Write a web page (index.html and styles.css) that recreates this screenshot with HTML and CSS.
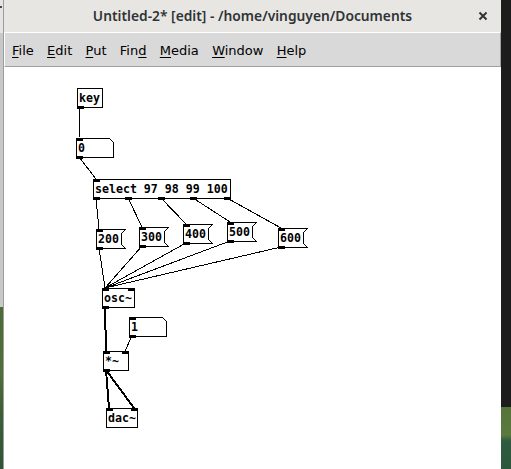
FILE: index.html
```
<!DOCTYPE html>
<html lang="en">
<head>
<meta charset="utf-8">
<title>Pd patch</title>
<link rel="stylesheet" href="styles.css">
</head>
<body>
<div class="screen">
  <div class="desk-left">
    <div class="dl-top"><i class="frag frag-a"></i><i class="frag frag-b"></i></div>
    <div class="dl-mid"></div>
    <div class="dl-green"></div>
  </div>
  <div class="window">
    <div class="titlebar">
      <span class="title">Untitled-2* [edit] - /home/vinguyen/Documents</span>
      <svg class="close" width="10" height="10" viewBox="0 0 10 10"><path d="M1.5 1.5 L8.5 8.5 M8.5 1.5 L1.5 8.5" stroke="#2e3436" stroke-width="2" fill="none"/></svg>
    </div>
    <div class="menubar">
      <span class="menu"><u>F</u>ile</span>
      <span class="menu"><u>E</u>dit</span>
      <span class="menu"><u>P</u>ut</span>
      <span class="menu">Fin<u>d</u></span>
      <span class="menu"><u>M</u>edia</span>
      <span class="menu"><u>W</u>indow</span>
      <span class="menu"><u>H</u>elp</span>
    </div>
    <div class="canvas">
      <svg class="patch" width="497" height="402" viewBox="4 67 497 402">
        <g class="cords">
          <line x1="80" y1="108" x2="79" y2="138"/>
          <line x1="79" y1="157" x2="96" y2="179"/>
          <line x1="96" y1="198" x2="99" y2="229"/>
          <line x1="128" y1="198" x2="142" y2="227"/>
          <line x1="161" y1="198" x2="186" y2="224"/>
          <line x1="193" y1="198" x2="230" y2="222"/>
          <line x1="227" y1="198" x2="281" y2="228"/>
          <line x1="99" y1="248" x2="105" y2="288"/>
          <line x1="142" y1="246" x2="105" y2="288"/>
          <line x1="186" y1="243" x2="105" y2="288"/>
          <line x1="230" y1="241" x2="105" y2="288"/>
          <line x1="281" y1="247" x2="105" y2="288"/>
          <line x1="132" y1="336" x2="125" y2="351"/>
        </g>
        <g class="cords sig">
          <line x1="105" y1="307" x2="106" y2="351"/>
          <line x1="106" y1="370" x2="109" y2="408"/>
          <line x1="106" y1="370" x2="134" y2="408"/>
        </g>
        <g class="boxes">
          <rect x="77.5" y="88.5" width="25" height="19"/>
          <polygon points="76.5,138.5 109.5,138.5 113.5,142.5 113.5,157.5 76.5,157.5"/>
          <rect x="93.5" y="179.5" width="137" height="19"/>
          <polygon points="96.5,229.5 125.5,229.5 121.5,233.5 121.5,244.5 125.5,248.5 96.5,248.5"/>
          <polygon points="139.5,227.5 168.5,227.5 164.5,231.5 164.5,242.5 168.5,246.5 139.5,246.5"/>
          <polygon points="183.5,224.5 212.5,224.5 208.5,228.5 208.5,239.5 212.5,243.5 183.5,243.5"/>
          <polygon points="227.5,222.5 256.5,222.5 252.5,226.5 252.5,237.5 256.5,241.5 227.5,241.5"/>
          <polygon points="278.5,228.5 307.5,228.5 303.5,232.5 303.5,243.5 307.5,247.5 278.5,247.5"/>
          <rect x="102.5" y="288.5" width="32" height="19"/>
          <polygon points="129.5,317.5 162.5,317.5 166.5,321.5 166.5,336.5 129.5,336.5"/>
          <rect x="103.5" y="351.5" width="25" height="19"/>
          <rect x="106.5" y="408.5" width="31" height="19"/>
        </g>
        <g class="ports">
          <rect x="77" y="106" width="7" height="3"/>
          <rect x="76" y="138" width="7" height="3"/>
          <rect x="76" y="156" width="7" height="3"/>
          <rect x="93" y="179" width="7" height="3"/>
          <rect x="93" y="197" width="7" height="3"/>
          <rect x="125" y="197" width="7" height="3"/>
          <rect x="158" y="197" width="7" height="3"/>
          <rect x="190" y="197" width="7" height="3"/>
          <rect x="224" y="197" width="7" height="3"/>
          <rect x="96" y="229" width="7" height="3"/>
          <rect x="96" y="247" width="7" height="3"/>
          <rect x="139" y="227" width="7" height="3"/>
          <rect x="139" y="245" width="7" height="3"/>
          <rect x="183" y="224" width="7" height="3"/>
          <rect x="183" y="242" width="7" height="3"/>
          <rect x="227" y="222" width="7" height="3"/>
          <rect x="227" y="240" width="7" height="3"/>
          <rect x="278" y="228" width="7" height="3"/>
          <rect x="278" y="246" width="7" height="3"/>
          <rect x="102" y="288" width="7" height="3"/>
          <rect x="128" y="288" width="7" height="3"/>
          <rect x="102" y="306" width="7" height="3"/>
          <rect x="129" y="317" width="7" height="3"/>
          <rect x="129" y="335" width="7" height="3"/>
          <rect x="103" y="351" width="7" height="3"/>
          <rect x="122" y="351" width="7" height="3"/>
          <rect x="103" y="369" width="7" height="3"/>
          <rect x="106" y="408" width="7" height="3"/>
          <rect x="131" y="408" width="7" height="3"/>
        </g>
        <g class="labels">
          <text x="79" y="102">key</text>
          <text x="78" y="152">0</text>
          <text x="95" y="193">select 97 98 99 100</text>
          <text x="98" y="243">200</text>
          <text x="141" y="241">300</text>
          <text x="185" y="238">400</text>
          <text x="229" y="236">500</text>
          <text x="280" y="242">600</text>
          <text x="104" y="302">osc~</text>
          <text x="131" y="331">1</text>
          <text x="105" y="365">*~</text>
          <text x="108" y="422">dac~</text>
        </g>
      </svg>
    </div>
  </div>
  <div class="desk-right">
    <div class="dr-dark"></div>
    <div class="dr-green"></div>
  </div>
</div>
</body>
</html>
```
FILE: styles.css
```
html, body {
  margin: 0;
  padding: 0;
}
body {
  width: 511px;
  height: 469px;
  overflow: hidden;
  background: #1c1c1c;
}
.screen {
  display: flex;
  width: 511px;
  height: 469px;
}
.desk-left {
  width: 3px;
  display: flex;
  flex-direction: column;
  overflow: hidden;
}
.dl-top {
  height: 33px;
  background: #e4e4e4;
  display: flex;
  flex-direction: column;
}
.frag {
  display: block;
  width: 2px;
  height: 7px;
  border: 1px solid currentColor;
  border-left: none;
  border-radius: 0 3px 3px 0;
  margin-left: -1px;
}
.frag-a {
  margin-top: 6px;
  color: #444;
}
.frag-b {
  margin-top: 26px;
  color: #d01010;
}
.dl-mid {
  flex: none;
  height: 274px;
  background: #c8c8c8;
}
.dl-top {
  flex: none;
  overflow: visible;
}
.dl-green {
  flex: 1;
  background: linear-gradient(180deg, #4c6b35 0%, #4f7038 40%, #3c5f37 65%, #2f5337 100%);
}
.window {
  width: 497px;
  display: flex;
  flex-direction: column;
  border-left: 1px solid #9c9c9c;
  background: #ffffff;
}
.titlebar {
  height: 32px;
  background: #e8e6e3;
  display: grid;
  grid-template-columns: 1fr auto 1fr;
  align-items: center;
}
.title {
  grid-column: 2;
  font-family: "Noto Sans", sans-serif;
  font-weight: 600;
  font-size: 13.8px;
  color: #2e3436;
  margin-top: -1px;
}
.close {
  grid-column: 3;
  justify-self: end;
  margin-right: 13px;
}
.menubar {
  background: #d9d9d9;
  border-top: 1px solid #ffffff;
  border-left: 1px solid #ffffff;
  border-right: 1px solid #9f9f9f;
  border-bottom: 1px solid #9f9f9f;
  display: flex;
  align-items: center;
  gap: 13.3px;
  padding: 2px 0 0 7px;
  box-sizing: border-box;
  height: 35px;
  font-family: "DejaVu Sans", sans-serif;
  font-size: 13px;
  color: #000;
}
.menu u {
  text-underline-offset: 2px;
}
.canvas {
  flex: 1;
  background: #ffffff;
  overflow: hidden;
}
.patch {
  display: block;
  shape-rendering: crispEdges;
}
.cords line {
  stroke: #000;
  stroke-width: 1;
}
.cords.sig line {
  stroke-width: 2;
}
.boxes rect, .boxes polygon {
  fill: none;
  stroke: #000;
  stroke-width: 1;
}
.ports rect {
  fill: #000;
}
.labels text {
  font-family: "DejaVu Sans Mono", monospace;
  font-weight: bold;
  font-size: 11.6px;
  fill: #000;
}
.desk-right {
  width: 10px;
  display: flex;
  flex-direction: column;
}
.dr-dark {
  height: 407px;
  background: #1c1c1c;
}
.dr-green {
  flex: 1;
  background: linear-gradient(180deg, #56733a 0%, #5a7a3e 45%, #2f5a40 55%, #2b573d 100%);
}
```
